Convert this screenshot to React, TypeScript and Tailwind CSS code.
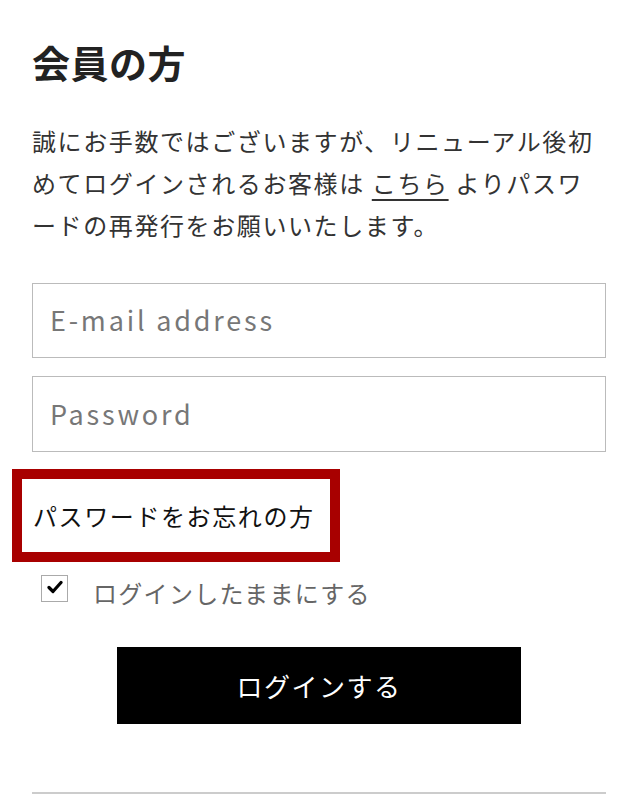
const FONT = "font-['Noto_Sans_CJK_JP','Noto_Sans',sans-serif]";

function CheckMark() {
  return (
    <svg width="16" height="14" viewBox="0 0 16 14" className="-mt-[4px]">
      <path d="M2 7.5 L6 11.5 L14 2.5" fill="none" stroke="#000" strokeWidth="3.2" strokeLinecap="round" strokeLinejoin="round" />
    </svg>
  );
}

export default function App() {
  return (
    <div className={`${FONT} min-h-[807px] bg-white px-[32px] text-[#222]`}>
      <h2 className="pt-[43px] text-[38px] font-bold leading-[38px] tracking-[0.5px] text-[#222]">会員の方</h2>

      <p className="mt-[39px] text-[24px] leading-[42px] tracking-[1.6px] text-[#333]">
        誠にお手数ではございますが、リニューアル後初
        <br />
        めてログインされるお客様は <a className="underline underline-offset-[6px] decoration-[1.5px]">こちら</a> よりパスワ
        <br />
        ードの再発行をお願いいたします。
      </p>

      <div className="mt-[37px] flex h-[75px] items-center border border-[#bbb] px-[17px]">
        <span className="text-[27px] tracking-[2.8px] text-[#777]">E-mail address</span>
      </div>
      <div className="mt-[18px] flex h-[76px] items-center border border-[#bbb] px-[17px]">
        <span className="text-[27px] tracking-[2.8px] text-[#777]">Password</span>
      </div>

      <div className="-ml-[20px] mt-[17px] flex h-[93px] w-[328px] items-center border-[10px] border-[#a80000] pl-[11px]">
        <span className="text-[24px] tracking-[1.6px] text-[#111]">パスワードをお忘れの方</span>
      </div>

      <label className="ml-[9px] mt-[13px] flex items-start gap-[25px]">
        <span className="flex h-[27px] w-[27px] items-center justify-center border border-[#aaa] bg-white">
          <CheckMark />
        </span>
        <span className="mt-[4px] text-[24px] leading-[27px] tracking-[1.3px] text-[#666]">ログインしたままにする</span>
      </label>

      <button className="mx-auto mt-[41px] flex h-[77px] w-[404px] items-center justify-center bg-black text-[26px] tracking-[1.5px] text-white">
        ログインする
      </button>

      <div className="mt-[68px] h-[2px] bg-[#ccc]" />
    </div>
  );
}
